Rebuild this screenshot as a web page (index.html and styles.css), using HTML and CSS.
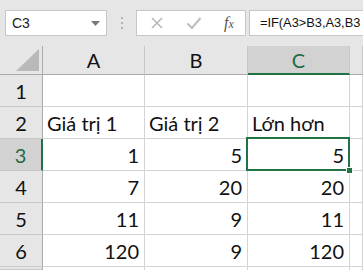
FILE: index.html
```html
<!DOCTYPE html>
<html>
<head>
    <title>Sheet</title>
    <link rel="stylesheet" href="styles.css">
</head>
<body>
    <div class="formulaBar">
        <div class="nameBox">
            <span>C3</span>
            <svg class="caret" width="9" height="5" viewBox="0 0 9 5"><polygon points="0,0 9,0 4.5,5" fill="#7a7a7a"/></svg>
        </div>
        <div class="grip"><i></i><i></i><i></i></div>
        <div class="fxButtons">
            <svg width="14" height="14" viewBox="0 0 14 14"><path d="M2 2 L12 12 M12 2 L2 12" stroke="#b8b8b8" stroke-width="1.6" fill="none"/></svg>
            <svg width="16" height="14" viewBox="0 0 16 14"><path d="M1.5 7.5 L6 12 L14.5 2" stroke="#bdbdbd" stroke-width="2" fill="none"/></svg>
            <span class="fx">f<small>x</small></span>
        </div>
        <div class="formulaInput">=IF(A3&gt;B3,A3,B3</div>
    </div>

    <div class="sheet">
        <div class="corner"><svg width="23" height="22" viewBox="0 0 23 22"><polygon points="23,0 23,22 0,22" fill="#b9b9b9"/></svg></div>
        <div class="colHead">A</div>
        <div class="colHead">B</div>
        <div class="colHead active">C</div>
        <div class="colHead"></div>

        <div class="rowHead">1</div>
        <div class="cell"></div><div class="cell"></div><div class="cell"></div><div class="cell"></div>

        <div class="rowHead">2</div>
        <div class="cell">Giá trị 1</div><div class="cell">Giá trị 2</div><div class="cell">Lớn hơn</div><div class="cell"></div>

        <div class="rowHead active">3</div>
        <div class="cell num">1</div><div class="cell num">5</div><div class="cell num selected">5</div><div class="cell"></div>

        <div class="rowHead">4</div>
        <div class="cell num">7</div><div class="cell num">20</div><div class="cell num">20</div><div class="cell"></div>

        <div class="rowHead">5</div>
        <div class="cell num">11</div><div class="cell num">9</div><div class="cell num">11</div><div class="cell"></div>

        <div class="rowHead">6</div>
        <div class="cell num">120</div><div class="cell num">9</div><div class="cell num">120</div><div class="cell"></div>

        <div class="rowHead"></div>
        <div class="cell"></div><div class="cell"></div><div class="cell"></div><div class="cell"></div>
    </div>
</body>
</html>
```

FILE: styles.css
```css
body {
    margin: 0;
    width: 363px;
    height: 270px;
    overflow: hidden;
    background: #e6e6e6;
    font-family: Lato, "Liberation Sans", sans-serif;
}
.formulaBar {
    display: flex;
    align-items: center;
    height: 46px;
    padding-left: 5px;
}
.nameBox {
    display: flex;
    align-items: center;
    justify-content: space-between;
    box-sizing: border-box;
    width: 102px;
    height: 26px;
    padding: 0 6px 0 6px;
    background: #fff;
    border: 1px solid #c6c6c6;
    font-family: "Liberation Sans", sans-serif;
    font-size: 14px;
    color: #222;
}
.grip {
    display: flex;
    flex-direction: column;
    gap: 3px;
    margin: 0 13px 0 14px;
}
.grip i {
    width: 2px;
    height: 2px;
    background: #b3b3b3;
}
.fxButtons {
    display: flex;
    align-items: center;
    box-sizing: border-box;
    width: 110px;
    height: 26px;
    padding: 0 0 0 13px;
    background: #fff;
    border: 1px solid #c6c6c6;
}
.fxButtons svg:nth-child(2) {
    margin-left: 22px;
}
.fx {
    margin-left: 22px;
    font-family: "Liberation Serif", serif;
    font-style: italic;
    font-size: 16px;
    color: #555;
}
.fx small {
    font-size: 12px;
}
.formulaInput {
    flex: 1;
    min-width: 0;
    box-sizing: border-box;
    height: 26px;
    margin-left: 3px;
    padding: 4px 0 0 10px;
    background: #fff;
    border: 1px solid #c6c6c6;
    border-right: none;
    white-space: nowrap;
    overflow: hidden;
    font-family: "Liberation Sans", sans-serif;
    font-size: 12.8px;
    color: #111;
}
.sheet {
    display: grid;
    grid-template-columns: 43px 102px 103px 102px 1fr;
    grid-template-rows: 29px repeat(6, 32px) 3px;
    background: #fff;
    font-size: 20px;
    color: #111;
}
.sheet > div {
    box-sizing: border-box;
    border-right: 1px solid #d4d4d4;
    border-bottom: 1px solid #d4d4d4;
}
.corner {
    display: flex;
    align-items: flex-end;
    justify-content: flex-end;
    padding: 0 3px 3px 0;
    background: #e6e6e6;
    border-right-color: #ababab !important;
    border-bottom-color: #ababab !important;
}
.sheet > .colHead {
    display: flex;
    align-items: center;
    justify-content: center;
    background: #e6e6e6;
    border-right-color: #c8c8c8;
    border-bottom-color: #ababab;
}
.sheet > .rowHead {
    display: flex;
    align-items: center;
    justify-content: center;
    background: #e6e6e6;
    border-right-color: #ababab;
    border-bottom-color: #c8c8c8;
}
.sheet > .colHead.active {
    background: #d2d2d2;
    color: #1e6b44;
    border-bottom: 2px solid #217346;
}
.sheet > .rowHead.active {
    background: #d2d2d2;
    color: #1e6b44;
    border-right: 2px solid #217346;
}
.cell {
    display: flex;
    align-items: flex-end;
    padding: 0 0 3px 4px;
    white-space: nowrap;
}
.cell.num {
    justify-content: flex-end;
    padding: 0 5px 3px 0;
}
.selected {
    position: relative;
}
.selected::after {
    content: "";
    position: absolute;
    top: -2px;
    left: -2px;
    right: -1px;
    bottom: -1px;
    border: 2px solid #217346;
}
.selected::before {
    content: "";
    position: absolute;
    right: -4px;
    bottom: -4px;
    width: 5px;
    height: 5px;
    background: #217346;
    border: 1px solid #fff;
    z-index: 1;
}
```
